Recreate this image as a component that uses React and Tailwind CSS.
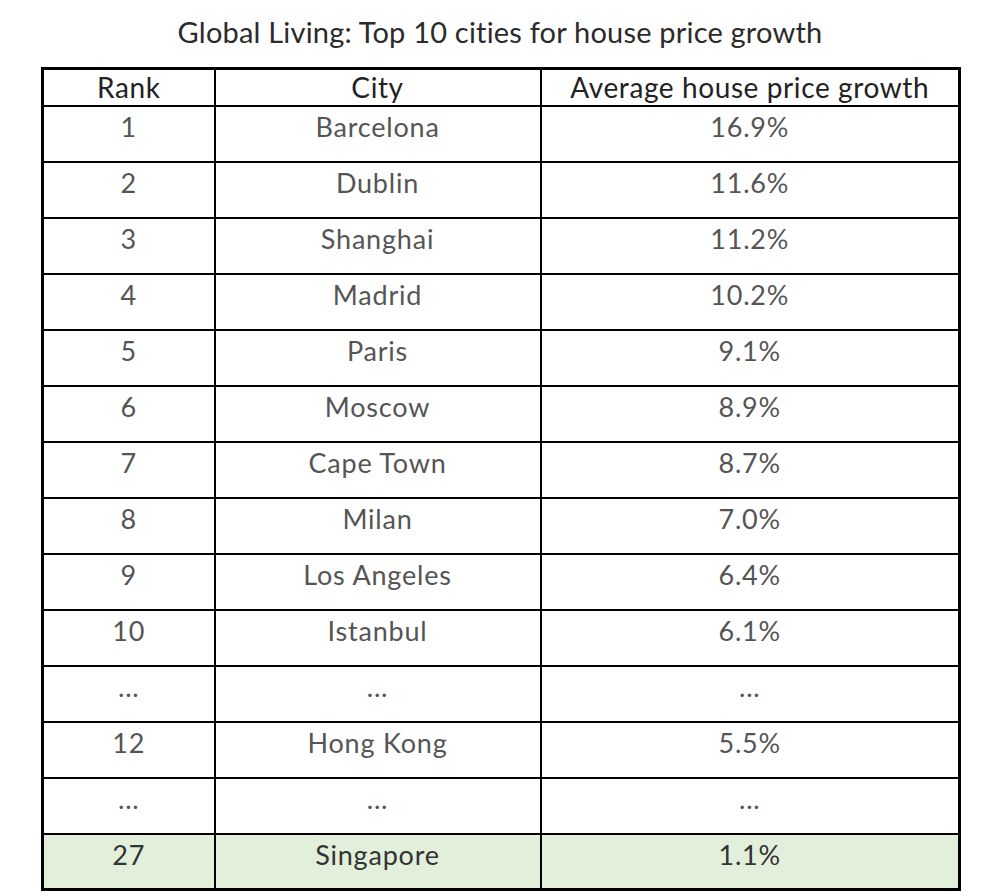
const rows = [
  ['1', 'Barcelona', '16.9%'],
  ['2', 'Dublin', '11.6%'],
  ['3', 'Shanghai', '11.2%'],
  ['4', 'Madrid', '10.2%'],
  ['5', 'Paris', '9.1%'],
  ['6', 'Moscow', '8.9%'],
  ['7', 'Cape Town', '8.7%'],
  ['8', 'Milan', '7.0%'],
  ['9', 'Los Angeles', '6.4%'],
  ['10', 'Istanbul', '6.1%'],
  ['...', '...', '...'],
  ['12', 'Hong Kong', '5.5%'],
  ['...', '...', '...'],
  ['27', 'Singapore', '1.1%'],
];

export default function App() {
  return (
    <div className="w-[1000px] h-[896px] bg-white overflow-hidden font-['Lato',sans-serif]">
      <h1 className="h-[67px] pt-[12px] text-center text-[29px] leading-[40px] tracking-[0.2px] text-[#2b2b2b]">
        Global Living: Top 10 cities for house price growth
      </h1>
      <table className="ml-[41px] w-[920px] border-collapse border-[3px] border-black table-fixed">
        <colgroup>
          <col className="w-[172px]" />
          <col className="w-[326px]" />
          <col />
        </colgroup>
        <thead>
          <tr className="h-[37px]">
            <th className="border-2 border-black font-normal text-[28px] leading-[30px] tracking-[0.6px] text-[#222] p-0">Rank</th>
            <th className="border-2 border-black font-normal text-[28px] leading-[30px] tracking-[0.6px] text-[#222] p-0">City</th>
            <th className="border-2 border-black font-normal text-[28px] leading-[30px] tracking-[0.6px] text-[#222] p-0">Average house price growth</th>
          </tr>
        </thead>
        <tbody>
          {rows.map((r, i) => {
            const last = i === rows.length - 1;
            return (
              <tr key={i} className={`h-[56px] ${last ? 'bg-[#e2efda]' : 'bg-white'}`}>
                {r.map((c, j) => (
                  <td
                    key={j}
                    className={`border-2 border-black text-center align-top p-0 pt-[5px] text-[27px] leading-[30px] tracking-[0.8px] ${
                      last ? 'text-[#333]' : 'text-[#555]'
                    }`}
                  >
                    {c}
                  </td>
                ))}
              </tr>
            );
          })}
        </tbody>
      </table>
    </div>
  );
}
